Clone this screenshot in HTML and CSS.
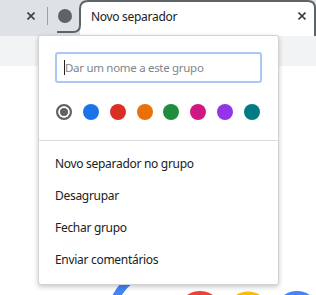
FILE: index.html
```html
<!DOCTYPE html>
<html lang="pt">
<head>
  <meta charset="UTF-8" />
  <title>Novo separador</title>
  <link rel="stylesheet" href="styles.css">
</head>
<body>

  <div class="tabstrip">
    <svg class="group-outline" width="316" height="36" viewBox="0 0 316 36">
      <path d="M57 32 H73 Q80 32 80 25 V9 Q80 1 88 1 H308 Q315 1 315 8 V36" />
    </svg>
    <div class="tab-prev">
      <svg class="close-icon" width="8" height="8" viewBox="0 0 8 8"><path d="M0.5 0.5 L7.5 7.5 M7.5 0.5 L0.5 7.5" /></svg>
    </div>
    <div class="tab-sep"></div>
    <div class="group-chip"><span class="chip-dot"></span></div>
    <div class="tab active">
      <span class="tab-title">Novo separador</span>
      <svg class="close-icon" width="8" height="8" viewBox="0 0 8 8"><path d="M0.5 0.5 L7.5 7.5 M7.5 0.5 L0.5 7.5" /></svg>
    </div>
  </div>

  <div class="toolbar"></div>

  <div class="ntp">
    <svg class="logo" width="316" height="14" viewBox="0 282 316 14">
      <path d="M131 279 Q122 286 116 297" stroke="#4285f4" stroke-width="8" fill="none" />
      <circle cx="200" cy="313.5" r="18" stroke="#ea4335" stroke-width="9" fill="none" />
      <circle cx="248" cy="314" r="18" stroke="#fbbc05" stroke-width="9" fill="none" />
      <circle cx="297" cy="313.5" r="18" stroke="#4285f4" stroke-width="9" fill="none" />
    </svg>
  </div>

  <div class="group-editor">
    <div class="name-field">
      <span class="caret"></span>
      <span class="placeholder">Dar um nome a este grupo</span>
    </div>

    <div class="swatches">
      <span class="swatch selected"></span>
      <span class="swatch blue"></span>
      <span class="swatch red"></span>
      <span class="swatch orange"></span>
      <span class="swatch green"></span>
      <span class="swatch pink"></span>
      <span class="swatch purple"></span>
      <span class="swatch teal"></span>
    </div>

    <div class="divider"></div>

    <div class="menu">
      <div class="menu-item">Novo separador no grupo</div>
      <div class="menu-item">Desagrupar</div>
      <div class="menu-item">Fechar grupo</div>
      <div class="menu-item">Enviar comentários</div>
    </div>
  </div>

</body>
</html>
```

FILE: styles.css
```css
body {
  margin: 0;
  width: 316px;
  height: 295px;
  overflow: hidden;
  position: relative;
  background: #fff;
  font-family: 'Noto Sans', 'Open Sans', sans-serif;
  font-size: 12px;
  letter-spacing: -0.3px;
  color: #202124;
}

.tabstrip {
  position: relative;
  display: flex;
  height: 36px;
  background: #dee1e6;
}

.group-outline {
  position: absolute;
  left: 0;
  top: 0;
  z-index: 2;
  pointer-events: none;
}

.group-outline path {
  fill: none;
  stroke: #5f6368;
  stroke-width: 2;
}

.close-icon path {
  stroke: #3c4043;
  stroke-width: 1.6;
  fill: none;
}

.tab-prev {
  width: 39px;
  display: flex;
  align-items: center;
  justify-content: flex-end;
  padding-right: 4px;
  padding-bottom: 4px;
  box-sizing: border-box;
}

.tab-sep {
  width: 1px;
  height: 18px;
  margin: 7px 0 0 8px;
  background: #9aa0a6;
}

.group-chip {
  display: flex;
  align-items: center;
  margin-left: 10px;
  padding-bottom: 4px;
}

.chip-dot {
  width: 14px;
  height: 14px;
  border-radius: 50%;
  background: #5f6368;
}

.tab {
  flex: 1;
  display: flex;
  align-items: center;
  margin-left: 8px;
  padding: 0 10px 4px 11px;
  background: #fff;
  border-radius: 8px 8px 0 0;
}

.tab-title {
  flex: 1;
}

.toolbar {
  height: 30px;
  background: #f1f3f4;
}

.ntp {
  padding-top: 216px;
}

.logo {
  display: block;
}

.group-editor {
  position: absolute;
  left: 38px;
  top: 35px;
  width: 241px;
  box-sizing: border-box;
  background: #fff;
  border: 1px solid #d3d3d3;
  border-radius: 3px;
  box-shadow: 0 2px 5px rgba(0, 0, 0, 0.22);
  z-index: 3;
}

.name-field {
  display: flex;
  align-items: center;
  height: 31px;
  margin: 16px 16px 0;
  padding-left: 7px;
  box-sizing: border-box;
  border: 2px solid #a9c8f3;
  border-radius: 3px;
}

.caret {
  width: 1px;
  height: 15px;
  background: #202124;
}

.placeholder {
  color: #80868b;
  font-size: 11.5px;
}

.swatches {
  display: flex;
  justify-content: space-between;
  margin: 21px 16px 0;
  padding: 0 2px 0 1px;
}

.swatch {
  width: 16px;
  height: 16px;
  border-radius: 50%;
  box-sizing: border-box;
}

.swatch.selected {
  background: #5f6368;
  border: 2px solid #5f6368;
  box-shadow: inset 0 0 0 2px #fff;
}

.swatch.blue { background: #1a73e8; }
.swatch.red { background: #d93025; }
.swatch.orange { background: #e8710a; }
.swatch.green { background: #1e8e3e; }
.swatch.pink { background: #d01884; }
.swatch.purple { background: #9334e6; }
.swatch.teal { background: #007b83; }

.divider {
  height: 1px;
  margin-top: 20px;
  background: #dadce0;
}

.menu {
  padding: 7px 0 8px;
}

.menu-item {
  height: 32px;
  line-height: 32px;
  padding-left: 16px;
}
```
